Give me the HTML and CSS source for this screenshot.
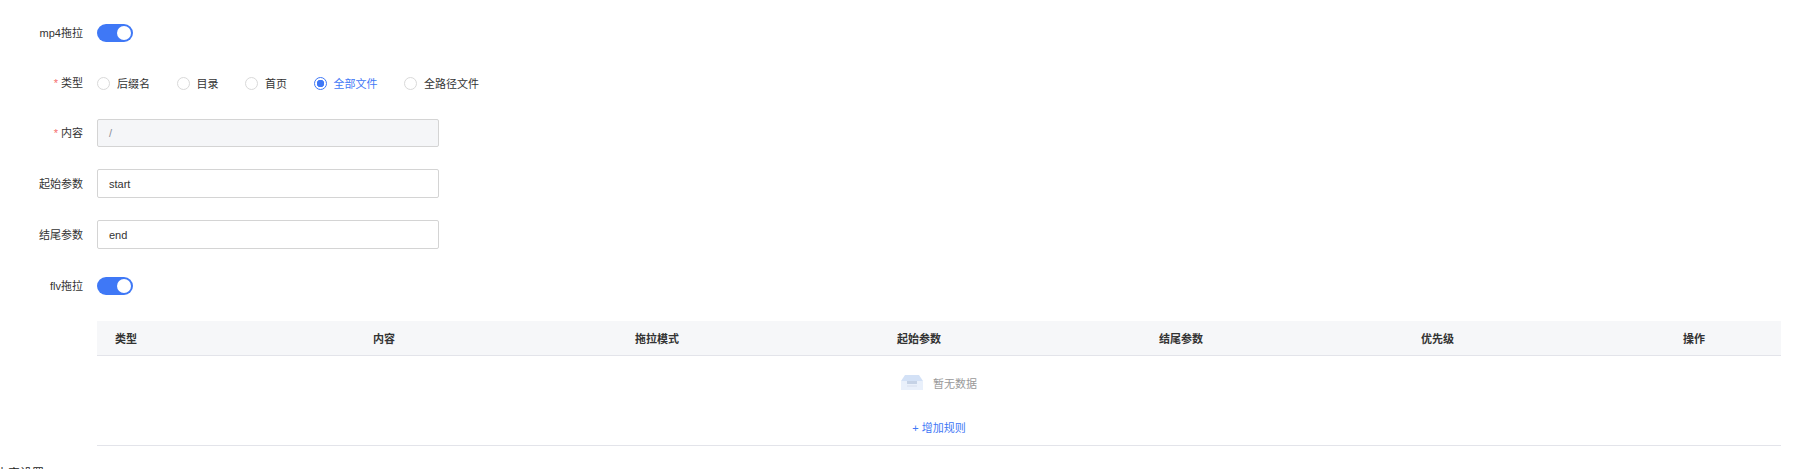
FILE: index.html
```html
<!DOCTYPE html>
<html lang="en">
  <head>
    <meta charset="UTF-8" />
    <meta name="viewport" content="width=device-width, initial-scale=1.0" />
    <title>拖拉设置</title>
    <link rel="stylesheet" href="styles.css">
  </head>
  <body>
    <form class="form">
      <div class="form-row row-switch">
        <label class="form-label">mp4拖拉</label>
        <span class="switch"><span class="switch-dot"></span></span>
      </div>

      <div class="form-row row-short">
        <label class="form-label"><span class="required">*</span>类型</label>
        <div class="radio-group">
          <span class="radio"><i class="radio-dot"></i>后缀名</span>
          <span class="radio"><i class="radio-dot"></i>目录</span>
          <span class="radio"><i class="radio-dot"></i>首页</span>
          <span class="radio checked"><i class="radio-dot"></i>全部文件</span>
          <span class="radio"><i class="radio-dot"></i>全路径文件</span>
        </div>
      </div>

      <div class="form-row row-short">
        <label class="form-label"><span class="required">*</span>内容</label>
        <div class="input disabled">/</div>
      </div>

      <div class="form-row">
        <label class="form-label">起始参数</label>
        <div class="input">start</div>
      </div>

      <div class="form-row">
        <label class="form-label">结尾参数</label>
        <div class="input">end</div>
      </div>

      <div class="form-row row-switch row-last">
        <label class="form-label">flv拖拉</label>
        <span class="switch"><span class="switch-dot"></span></span>
      </div>

      <div class="rule-table">
        <table>
          <thead>
            <tr>
              <th class="col-first">类型</th>
              <th class="col">内容</th>
              <th class="col">拖拉模式</th>
              <th class="col">起始参数</th>
              <th class="col">结尾参数</th>
              <th class="col">优先级</th>
              <th>操作</th>
            </tr>
          </thead>
        </table>
        <div class="empty">
          <svg class="empty-icon" width="22" height="15" viewBox="0 0 22 15">
            <path fill="#e9f0fb" d="M0 6h22v8.500a.5.500 0 0 1-.5.500H.5a.5.500 0 0 1-.5-.5z"></path>
            <path fill="#d3e1f6" d="M4 0h14l4 6H0z"></path>
            <path fill="#c5d2e6" d="M6 6h10v2.500a.5.500 0 0 1-.5.500h-9a.5.500 0 0 1-.5-.5z"></path>
            <path fill="#d6dfec" d="M6 10.500h10v1H6z"></path>
          </svg>
          <span>暂无数据</span>
        </div>
        <div class="add-rule">+ 增加规则</div>
      </div>

      <h3 class="next-title">内容设置</h3>
    </form>
  </body>
</html>
```

FILE: styles.css
```css
body {
  margin: 0;
  font-family: "Liberation Sans", "Noto Sans CJK SC", sans-serif;
  font-size: 11px;
  color: #333;
  background: #fff;
  overflow: hidden;
}

.form {
  padding: 18px 17px 0 0;
}

.form-row {
  display: flex;
  align-items: center;
  height: 29px;
  margin-bottom: 22px;
}

.row-short {
  height: 28px;
}

.row-switch {
  height: 30px;
  margin-bottom: 21px;
}

.row-last {
  margin-bottom: 20px;
}

.form-label {
  width: 83px;
  margin-right: 14px;
  padding-bottom: 2px;
  text-align: right;
  flex-shrink: 0;
}

.required {
  color: #f56c6c;
  margin-right: 3px;
}

/* Switch */
.switch {
  display: flex;
  justify-content: flex-end;
  align-items: center;
  width: 36px;
  height: 18px;
  padding-right: 2px;
  box-sizing: border-box;
  border-radius: 9px;
  background-color: #3f78f6;
}

.switch-dot {
  width: 14px;
  height: 14px;
  border-radius: 50%;
  background-color: #fff;
}

/* Radio */
.radio-group {
  display: flex;
}

.radio {
  display: flex;
  align-items: center;
  margin-right: 26.500px;
}

.radio-dot {
  width: 11px;
  height: 11px;
  margin-right: 7px;
  border: 1px solid #d9d9d9;
  border-radius: 50%;
}

.radio.checked {
  color: #3f78f6;
}

.radio.checked .radio-dot {
  border-color: #3f78f6;
  background: radial-gradient(circle, #3f78f6 0 3.500px, #fff 4px);
}

/* Input */
.input {
  display: flex;
  align-items: center;
  width: 342px;
  height: 100%;
  padding: 0 11px;
  box-sizing: border-box;
  border: 1px solid #d4d4d4;
  border-radius: 2px;
}

.input.disabled {
  color: #8a8f99;
  background-color: #f5f6f8;
}

/* Table */
.rule-table {
  margin-left: 97px;
  border-bottom: 1px solid #e3e4ea;
}

.rule-table table {
  width: 100%;
  border-collapse: collapse;
  table-layout: fixed;
}

.rule-table th {
  height: 34px;
  padding: 0 0 0 18px;
  box-sizing: border-box;
  text-align: left;
  font-weight: bold;
  background-color: #f6f7f9;
  border-bottom: 1px solid #e3e4ea;
}

.rule-table th.col-first {
  width: 258px;
}

.rule-table th.col {
  width: 262px;
}

.empty {
  display: flex;
  justify-content: center;
  align-items: center;
  height: 54px;
  color: #999;
}

.empty-icon {
  margin-right: 10px;
}

.add-rule {
  display: flex;
  justify-content: center;
  align-items: center;
  height: 35px;
  color: #3f78f6;
}

.next-title {
  margin: 18px 0 0 -4px;
  font-size: 12px;
  font-weight: normal;
  color: #222;
}
```
